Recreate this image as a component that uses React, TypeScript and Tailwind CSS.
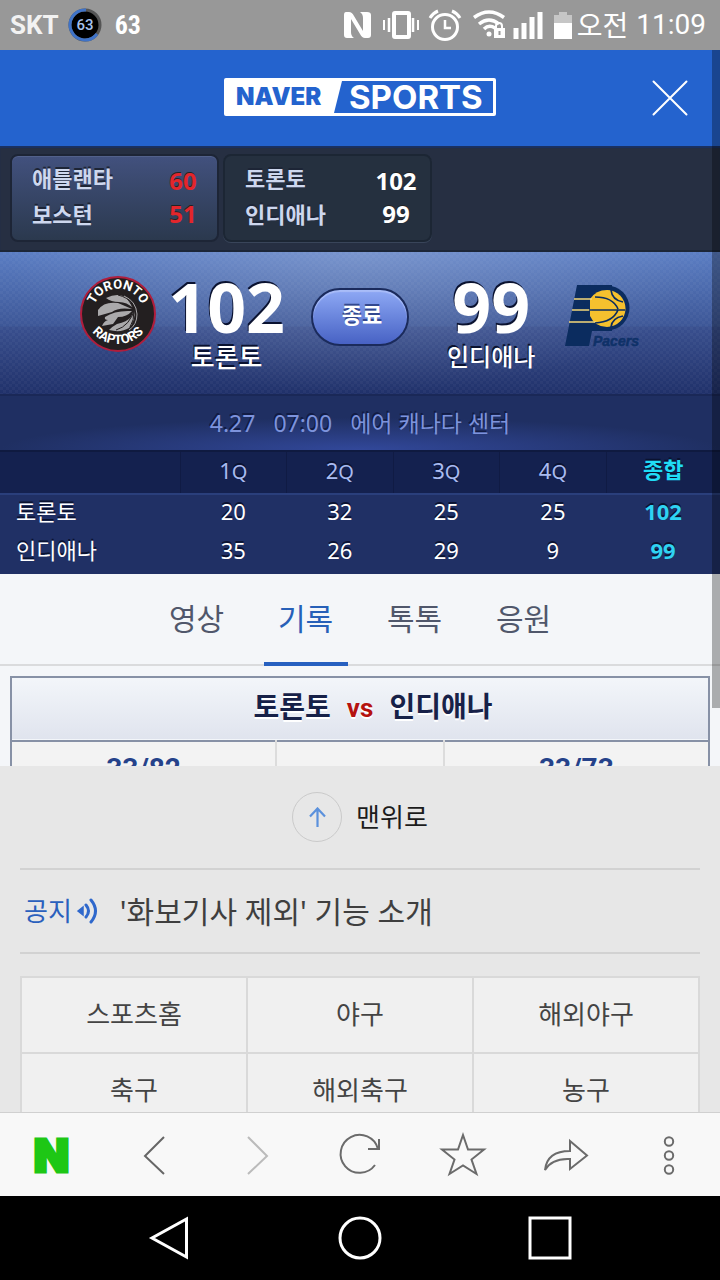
import React, { useState } from 'react';

const quarters = ['1', '2', '3', '4'];

const teams = [
  { name: '토론토', scores: [20, 32, 25, 25], total: 102 },
  { name: '인디애나', scores: [35, 26, 29, 9], total: 99 },
];

const games = [
  { id: 1, live: true, home: '애틀랜타', homeScore: 60, away: '보스턴', awayScore: 51 },
  { id: 2, live: false, home: '토론토', homeScore: 102, away: '인디애나', awayScore: 99 },
];

const tabs = ['영상', '기록', '톡톡', '응원'];

const menu = ['스포츠홈', '야구', '해외야구', '축구', '해외축구', '농구'];

const StatusBar = () => {
  return (
    <div className="flex h-[50px] shrink-0 items-center bg-[#989898] pl-[10px] pr-[14px] text-white">
      <span className="font-['Roboto',sans-serif] text-[26px] font-bold text-[#f2f2f2]">SKT</span>
      <svg className="ml-2 h-9 w-9" viewBox="0 0 36 36">
        <circle cx="18" cy="18" r="15" fill="#000" stroke="#555" strokeWidth="3" />
        <path d="M30 27A15 15 0 1 1 19 3" fill="none" stroke="#3f73c8" strokeWidth="3" />
        <text x="18" y="23" textAnchor="middle" fontSize="15" fontWeight="500" fontFamily="Roboto" fill="#a9c3ee">63</text>
      </svg>
      <span className="ml-3 font-['Roboto_Condensed','Roboto',sans-serif] text-[26px] font-bold">63</span>
      <svg className="ml-auto h-8 w-[230px]" viewBox="0 0 230 32" fill="none" stroke="#fff">
        {/* nfc */}
        <path d="M3 3h3q3 0 5 4l9 15V9q0-4-3-6h7q4 0 4 3v20q0 3-3 3h-3q-3 0-5-4L8 10v13q0 4 3 6H4q-3 0-3-3V6q0-3 2-3z" fill="#fff" stroke="none" />
        {/* vibrate */}
        <rect x="51" y="4" width="15" height="24" rx="1" strokeWidth="4" />
        <path d="M46 9v14M70 9v14" strokeWidth="2.5" />
        <path d="M41 11v10M75 11v10" strokeWidth="2" />
        {/* alarm */}
        <circle cx="102" cy="18" r="12.5" strokeWidth="3" />
        <path d="M102 11v8h6" strokeWidth="2.5" />
        <path d="M87 9q3-5 8-7M117 9q-3-5-8-7" strokeWidth="3" />
        {/* wifi */}
        <path d="M131 8.5q15-11 30 0M136 15q10-8 20 0M141 20q5-5 11-1" strokeWidth="3.5" />
        <circle cx="146" cy="25" r="2.5" fill="#fff" stroke="none" />
        <path d="M153 20v-3q0-3 3-3t3 3v3" strokeWidth="2" />
        <rect x="151" y="19" width="11" height="10" fill="#fff" stroke="none" />
        <path d="M156.500 22v4" stroke="#989898" strokeWidth="2" />
        {/* signal */}
        <path d="M173 19v11M181 14v16M189 8v22M197 3v27" strokeWidth="5" />
        {/* battery */}
        <path d="M211 6h5V3h8v3h5v9h-18z" fill="#c6c6c6" stroke="none" />
        <path d="M211 14h18v16h-18z" fill="#fff" stroke="none" />
      </svg>
      <span className="ml-1 text-[28px] leading-[50px]">오전</span>
      <span className="ml-2 font-['Roboto',sans-serif] text-[28px]">11:09</span>
    </div>
  );
};

const Header = () => {
  return (
    <header className="grid h-24 grid-cols-[1fr_272px_1fr] items-center bg-[#2463ce]">
      <h1 className="col-start-2 -mt-[2px]">
        <a href="#" aria-label="NAVER SPORTS">
          <svg className="block h-[38px] w-full" viewBox="0 0 272 38">
            <rect width="272" height="38" rx="2" fill="#fff" />
            <path d="M118 3H269V35H110z" fill="#2463ce" />
            <text x="12" y="27" fontSize="24" fontWeight="900" fontFamily="Inter" fill="#2463ce">NAVER</text>
            <text x="125" y="31" fontSize="33" fontWeight="700" fontFamily="Inter" fill="#fff">SPORTS</text>
          </svg>
        </a>
      </h1>
      <button className="mr-8 justify-self-end" aria-label="닫기">
        <svg className="h-9 w-9" viewBox="0 0 36 36" fill="none" stroke="#fff" strokeWidth="2" strokeLinecap="round">
          <path d="M1.500 1.500l33 33M34.500 1.500l-33 33" />
        </svg>
      </button>
    </header>
  );
};

const RaptorsLogo = () => {
  return (
    <svg className="h-19 w-19 shrink-0" viewBox="0 0 76 76">
      <defs>
        <path id="arcTop" d="M16 51A25.500 25.500 0 1 1 60 51" />
        <path id="arcBottom" d="M4 34A34 34 0 0 0 72 34" />
      </defs>
      <circle cx="38" cy="38" r="37" fill="#231f20" stroke="#b01d3c" strokeWidth="2" />
      <g fill="#aaa9ab">
        <path d="M26 22q14-7 23 2l4 8q-6-6-14-6-8 0-13-4z" />
        <path d="M18 34q6-9 20-7l14 6q-14-2-20 3l-14 4z" />
        <path d="M22 50q2-5 6-6-4 0-3-3 10-7 27-6-5 6-14 6l-5 7z" />
        <path d="M29 54q4-4 8-6 10-2 14-7l3-7q3 10-5 18-8 5-20 2z" />
      </g>
      <path d="M38 19q9 2 15 9 5 12-1 20M36 54q14-4 19-22M47 22q12 14 3 29" fill="none" stroke="#231f20" strokeWidth="1" />
      <path d="M44 20q12 5 13 18 0 11-8 16" fill="none" stroke="#aaa9ab" strokeWidth="1" />
      <g fill="#fff" fontFamily="Roboto" fontWeight="700" fontSize="13" textAnchor="middle">
        <text><textPath href="#arcTop" startOffset="50%">TORONTO</textPath></text>
        <text><textPath href="#arcBottom" startOffset="50%">RAPTORS</textPath></text>
      </g>
    </svg>
  );
};

const PacersLogo = () => {
  return (
    <svg className="h-[68px] w-[84px] shrink-0" viewBox="0 0 84 68">
      <path d="M12 0h35v46H27l-3 15H0z" fill="#0b2c5f" />
      <circle cx="42" cy="23" r="22.500" fill="#0b2c5f" />
      <path d="M25 14q6-9 17-9a18 18 0 0 1 0 37q-12 0-17-11z" fill="#f5c12e" />
      <path d="M9 14h18M7 25h20M4 37h27" stroke="#f5d77a" strokeWidth="1.500" />
      <path d="M24 25h36M46 5q1 10 12 12M30 12q18 0 23 12M30 38q18-1 23-13M46 42q1-9 12-11" fill="none" stroke="#0b2c5f" strokeWidth="1.700" />
      <text x="28" y="61" fontSize="14" fontWeight="700" fontStyle="italic" fontFamily="Liberation Sans" fill="#0f3168" stroke="#0f3168" strokeWidth="0.500">Pacers</text>
    </svg>
  );
};

const GameList = () => {
  return (
    <ul className="flex h-[106px] gap-1 border-b-2 border-[#1c2638] bg-[#262f42] px-[10px] pb-2 pt-2 font-semibold shadow-[inset_0_2px_1px_#1a3162]">
      {games.map((game) => (
        <li
          key={game.id}
          className={
            game.live
              ? 'w-[209px] rounded-lg border-2 border-[#1d2536] bg-linear-to-b from-[#42517e] to-[#2b394e] shadow-[inset_0_1px_0_#52618b]'
              : 'w-[209px] rounded-lg border-2 border-[#1c2634] bg-[#25303f] shadow-[0_1px_0_#39455a]'
          }
        >
          <a href="#" className="block pl-5 pt-1 text-[22px] leading-9">
            <span className="flex justify-between">
              <span className="text-[#cdd7ee] [text-shadow:0_-2px_0_#1d2536]">{game.home}</span>
              <span className={game.live ? 'w-[68px] pt-[3px] text-center text-[24px] font-bold text-[#e3262c] [text-shadow:0_-1px_0_#222]' : 'w-[68px] pt-[3px] text-center text-[24px] font-bold text-white [text-shadow:0_-1px_0_#222]'}>
                {game.homeScore}
              </span>
            </span>
            <span className="-mt-[3px] flex justify-between">
              <span className="text-[#cdd7ee] [text-shadow:0_-2px_0_#1d2536]">{game.away}</span>
              <span className={game.live ? 'w-[68px] text-center text-[24px] font-bold text-[#e3262c] [text-shadow:0_-1px_0_#222]' : 'w-[68px] text-center text-[24px] font-bold text-white [text-shadow:0_-1px_0_#222]'}>
                {game.awayScore}
              </span>
            </span>
          </a>
        </li>
      ))}
    </ul>
  );
};

const Score = () => {
  return (
    <section className="bg-[radial-gradient(ellipse_at_top,#ffffff30,transparent_70%),repeating-conic-gradient(#ffffff08_0_25%,transparent_0_50%),linear-gradient(#5a7dc3,#3d5797_52%,#394f8e_53%,#20316a)] bg-[size:auto,6px_6px,auto]">
      <div className="grid h-[142px] grid-cols-[1fr_98px_1fr] text-white">
        <div className="flex justify-end gap-3 pr-[26px] pt-6">
          <RaptorsLogo />
          <div className="text-center [text-shadow:-1px_-2px_0_#0a1230]">
            <div className="text-[68px] font-bold leading-[62px]">102</div>
            <div className="text-[26px] font-medium leading-[38px]">토론토</div>
          </div>
        </div>
        <button className="mt-9 h-[58px] rounded-full border-2 border-[#1b2b5c] bg-linear-to-b from-[#8fa9f5] to-[#4862c4] text-[22px] font-semibold text-white shadow-[inset_0_2px_1px_#a9bdf8] [text-shadow:0_-2px_0_#33488f]">
          <span className="block pb-[6px] pl-1">종료</span>
        </button>
        <div className="flex gap-[30px] pl-[38px] pt-6">
          <div className="text-center [text-shadow:-1px_-2px_0_#0a1230]">
            <div className="text-[68px] font-bold leading-[62px]">99</div>
            <div className="text-[24px] font-medium leading-[38px]">인디애나</div>
          </div>
          <div className="pt-[9px]">
            <PacersLogo />
          </div>
        </div>
      </div>
    </section>
  );
};

const QuarterTable = () => {
  return (
    <table className="w-full table-fixed border-collapse text-[22px]">
      <thead>
        <tr className="h-[43px] border-b-2 border-t-2 border-b-[#2a3f7c] border-t-[#0f1a40] bg-[#14214f] leading-[30px] text-[#a9bbf0] [text-shadow:0_-2px_0_#0a1230]">
          <th className="w-1/4 border-r border-[#101b44]"></th>
          {quarters.map((q) => (
            <th key={q} className="w-[14.8%] border-r border-[#101b44] p-0 pb-1 font-normal">
              {q}<span className="text-[20px]">Q</span>
            </th>
          ))}
          <th className="p-0 pb-2 font-bold text-[#20dcf5]">종합</th>
        </tr>
      </thead>
      <tbody className="bg-[#203065] leading-6 text-white [text-shadow:0_-2px_0_#0a1230]">
        {teams.map((team) => (
          <tr key={team.name} className="h-10">
            <th className="p-0 pb-2 pl-4 text-left font-normal">{team.name}</th>
            {team.scores.map((score, i) => (
              <td key={i} className="p-0 pb-2 text-center">{score}</td>
            ))}
            <td className="p-0 pb-2 text-center font-bold text-[#2fd3f2]">{team.total}</td>
          </tr>
        ))}
      </tbody>
    </table>
  );
};

const Tabs = ({ tab, setTab }: any) => {
  return (
    <nav className="flex h-[92px] justify-center gap-[25px] border-b-2 border-[#dadbdd] bg-[#f4f6f9]">
      {tabs.map((name) => (
        <button
          key={name}
          onClick={() => setTab(name)}
          className={
            tab === name
              ? '-mb-[2px] w-[84px] border-b-4 border-[#2760c0] text-[30px] text-[#2760b8]'
              : '-mb-[2px] w-[84px] border-b-4 border-transparent text-[30px] text-[#50576b]'
          }
        >
          {name}
        </button>
      ))}
    </nav>
  );
};

const Record = () => {
  return (
    <section className="h-[100px] overflow-hidden bg-[#f4f6f9] px-[10px] pt-[10px]">
      <table className="w-full table-fixed border-collapse border-2 border-[#8791a6]">
        <colgroup>
          <col className="w-[38%]" />
          <col />
          <col className="w-[38%]" />
        </colgroup>
        <thead>
          <tr className="h-16 border-b-2 border-[#8791a6] bg-linear-to-b from-[#f3f6fa] to-[#e0e4ee]">
            <th colSpan={3} className="p-0 pb-1 pl-[26px] text-[28px] font-bold leading-10 text-[#172148] [text-shadow:0_2px_0_#fff]">
              토론토
              <span className="mx-4 font-['Roboto',sans-serif] text-[26px] text-[#b5120f]">vs</span>
              인디애나
            </th>
          </tr>
        </thead>
        <tbody>
          <tr className="bg-[#f3f3f3] text-center align-top font-['Roboto',sans-serif] text-[28px] font-bold leading-[30px] text-[#25428a]">
            <td className="p-0 pt-3">33/82</td>
            <td className="border-x-2 border-[#dcdcdc] p-0"></td>
            <td className="p-0 pt-3">33/73</td>
          </tr>
        </tbody>
      </table>
    </section>
  );
};

const Footer = () => {
  return (
    <footer className="px-5 text-[26px]">
      <div className="flex h-[104px] items-center justify-center border-b-2 border-[#d2d2d2]">
        <a href="#" className="flex items-center gap-[14px] text-[#1c1c1c]">
          <span className="flex h-[50px] w-[50px] items-center justify-center rounded-full border border-[#cacaca]">
            <svg className="h-5 w-5" viewBox="0 0 20 20" fill="none" stroke="#5b91dc" strokeWidth="2.200">
              <path d="M10.500 20V2M3 9.500l7.500-8 7.500 8" />
            </svg>
          </span>
          맨위로
        </a>
      </div>
      <div className="flex h-[84px] items-center border-b-2 border-[#d2d2d2] pl-1">
        <strong className="font-normal text-[#2a60bd]">공지</strong>
        <svg className="ml-1 h-7 w-6" viewBox="0 0 24 28" fill="none" stroke="#2f68cc" strokeWidth="3" strokeLinecap="round">
          <path d="M2 14l5-4v8z" fill="#2f68cc" stroke="#2f68cc" strokeWidth="1.500" />
          <path d="M10 8q5 6 0 12M15 3q9 11 0 22" />
        </svg>
        <a href="#" className="ml-5 text-[30px] text-[#3f3f3f]">'화보기사 제외' 기능 소개</a>
      </div>
      <ul className="mt-[22px] grid grid-cols-3 border-r-2 border-t-2 border-[#d9d9d9] bg-[#f0f0f0]">
        {menu.map((item) => (
          <li key={item} className="h-19 border-b-2 border-l-2 border-[#d9d9d9]">
            <a href="#" className="flex h-full items-center justify-center pb-[2px] text-[#444]">{item}</a>
          </li>
        ))}
      </ul>
    </footer>
  );
};

const Toolbar = () => {
  return (
    <div className="grid h-[84px] shrink-0 grid-cols-7 border-t border-[#d0d0d0] bg-[#f8f8f8]">
      <button className="flex items-center justify-center font-['Inter',sans-serif] text-[46px] font-black leading-none text-[#1ec715] [-webkit-text-stroke:3px_#1ec715]">N</button>
      <button className="flex items-center justify-center" aria-label="뒤로">
        <svg className="h-12 w-12" viewBox="0 0 48 48" fill="none" stroke="#666" strokeWidth="2">
          <path d="M34 6L15 25l19 18" />
        </svg>
      </button>
      <button className="flex items-center justify-center" aria-label="앞으로">
        <svg className="h-12 w-12" viewBox="0 0 48 48" fill="none" stroke="#bbb" strokeWidth="2">
          <path d="M15 6l19 19-19 18" />
        </svg>
      </button>
      <button className="flex items-center justify-center" aria-label="새로고침">
        <svg className="h-12 w-12" viewBox="0 0 48 48" fill="none" stroke="#6b6b6b" strokeWidth="2">
          <path d="M39 34A19 19 0 1 1 42 18" />
          <path d="M43 8v10H32" />
        </svg>
      </button>
      <button className="flex items-center justify-center" aria-label="즐겨찾기">
        <svg className="h-12 w-12" viewBox="0 0 48 48" fill="none" stroke="#6b6b6b" strokeWidth="2">
          <path d="M24 4l5 14.500h16L32.500 28.500 37.500 43 24 34.500 10.500 43l5-14.500L3 18.500h16z" />
        </svg>
      </button>
      <button className="flex items-center justify-center" aria-label="공유">
        <svg className="h-12 w-12" viewBox="0 0 48 48" fill="none" stroke="#6b6b6b" strokeWidth="2">
          <path d="M28 10l17 14.500L28 38V28Q10 27 3 39 5 20 28 20z" />
        </svg>
      </button>
      <button className="flex items-center justify-center" aria-label="더보기">
        <svg className="h-12 w-12" viewBox="0 0 48 48" fill="none" stroke="#6b6b6b" strokeWidth="2">
          <circle cx="24" cy="10.500" r="4.200" />
          <circle cx="24" cy="24.500" r="4.200" />
          <circle cx="24" cy="38.500" r="4.200" />
        </svg>
      </button>
    </div>
  );
};

const SystemNav = () => {
  return (
    <div className="flex h-[84px] shrink-0 items-center justify-center gap-[142px] bg-black">
      <button aria-label="back">
        <svg className="h-12 w-12" viewBox="0 0 48 48" fill="none" stroke="#fff" strokeWidth="3">
          <path d="M40.500 5v38L6 24z" />
        </svg>
      </button>
      <button aria-label="home">
        <svg className="h-12 w-12" viewBox="0 0 48 48" fill="none" stroke="#fff" strokeWidth="3">
          <circle cx="24" cy="24" r="20" />
        </svg>
      </button>
      <button aria-label="recent">
        <svg className="h-12 w-12" viewBox="0 0 48 48" fill="none" stroke="#fff" strokeWidth="3">
          <rect x="4" y="4" width="40" height="40" />
        </svg>
      </button>
    </div>
  );
};

const App = () => {
  const [tab, setTab] = useState('기록');

  return (
    <div className="flex h-screen flex-col font-['Noto_Sans','Noto_Sans_CJK_KR',sans-serif]">
      <StatusBar />
      <main className="relative min-h-0 flex-1 overflow-hidden bg-[#e7e7e7]">
        <Header />
        <GameList />
        <Score />
        <div className="flex h-14 justify-center gap-[18px] border-t-2 border-[#1a2857] bg-[#1f2f62] bg-[radial-gradient(ellipse_50%_60%_at_bottom,#32489a,transparent)] text-[23px] leading-[54px] text-[#7d93dc] [text-shadow:-1px_-2px_0_#121c44]">
          <span>4.27</span>
          <span>07:00</span>
          <span>에어 캐나다 센터</span>
        </div>
        <QuarterTable />
        <Tabs tab={tab} setTab={setTab} />
        <Record />
        <Footer />
        {/* scroll thumb */}
        <div className="absolute right-0 top-0 h-[658px] w-2 bg-black/30"></div>
      </main>
      <Toolbar />
      <SystemNav />
    </div>
  );
};

export default App;
